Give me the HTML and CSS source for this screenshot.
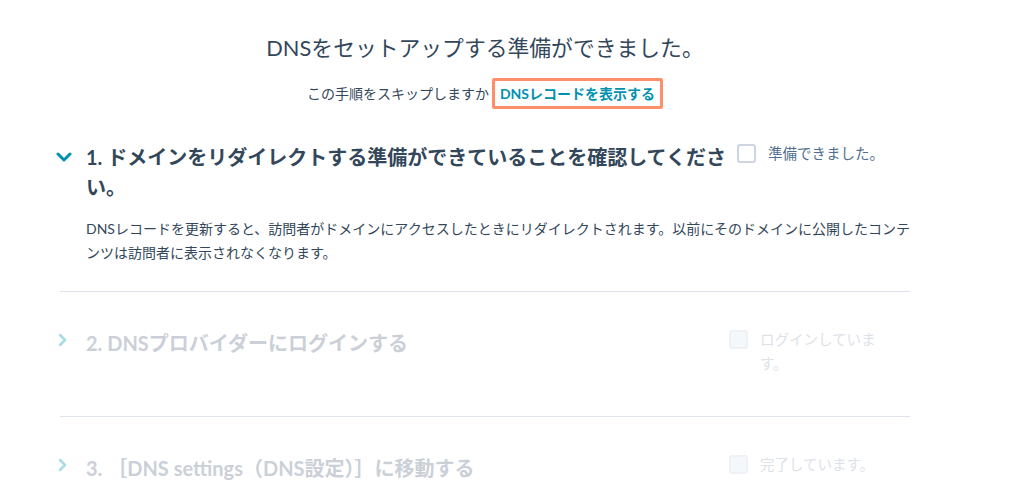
FILE: index.html
```html
<!DOCTYPE html>
<html lang="ja">
<head>
  <meta charset="UTF-8" />
  <meta name="viewport" content="width=device-width, initial-scale=1.0" />
  <title>DNSセットアップ</title>
  <link rel="stylesheet" href="styles.css">
</head>
<body>

  <div class="wizard">
    <h1 class="page-title">DNSをセットアップする準備ができました。</h1>
    <p class="skip">この手順をスキップしますか？<a href="#" class="skip-link">DNSレコードを表示する</a></p>

    <div class="steps">
      <div class="step open">
        <div class="step-head">
          <span class="chev">
            <svg width="16" height="10" viewBox="0 0 16 10"><polyline points="2,2 8,8 14,2" fill="none" stroke="#0091ae" stroke-width="3" stroke-linecap="round" stroke-linejoin="round"/></svg>
          </span>
          <h2 class="step-title">1. ドメインをリダイレクトする準備ができていることを確認してください。</h2>
          <label class="check first">
            <span class="box"></span>
            <span class="check-text">準備できました。</span>
          </label>
        </div>
        <p class="step-desc">DNSレコードを更新すると、訪問者がドメインにアクセスしたときにリダイレクトされます。以前にそのドメインに公開したコンテンツは訪問者に表示されなくなります。</p>
      </div>

      <div class="step disabled">
        <div class="step-head">
          <span class="chev">
            <svg width="10" height="16" viewBox="0 0 10 16"><polyline points="3,3 8,8 3,13" fill="none" stroke="#a9dde6" stroke-width="2.5" stroke-linecap="round" stroke-linejoin="round"/></svg>
          </span>
          <h2 class="step-title">2. DNSプロバイダーにログインする</h2>
          <label class="check">
            <span class="box"></span>
            <span class="check-text">ログインしています。</span>
          </label>
        </div>
      </div>

      <div class="step disabled">
        <div class="step-head">
          <span class="chev">
            <svg width="10" height="16" viewBox="0 0 10 16"><polyline points="3,3 8,8 3,13" fill="none" stroke="#a9dde6" stroke-width="2.5" stroke-linecap="round" stroke-linejoin="round"/></svg>
          </span>
          <h2 class="step-title">3. ［DNS settings（DNS設定）］に移動する</h2>
          <label class="check">
            <span class="box"></span>
            <span class="check-text">完了しています。</span>
          </label>
        </div>
      </div>
    </div>
  </div>

</body>
</html>
```

FILE: styles.css
```css
* {
  box-sizing: border-box;
}

html, body {
  margin: 0;
  padding: 0;
  background: #ffffff;
  color: #33475b;
  font-family: Lato, "Noto Sans CJK JP", sans-serif;
  overflow: hidden;
}

.wizard {
  width: 850px;
  margin-left: 60px;
  padding-top: 33px;
}

.page-title {
  margin: 0;
  text-align: center;
  font-size: 21.8px;
  font-weight: 400;
  line-height: 30px;
}

.skip {
  margin: 15px 0 0;
  text-align: center;
  font-size: 14px;
  line-height: 31px;
}

.skip-link {
  display: inline-block;
  margin-left: -11px;
  padding: 0 5px;
  height: 31px;
  line-height: 25px;
  border: 3px solid #ff8f6b;
  border-radius: 2px;
  background: #ffffff;
  color: #0091ae;
  font-weight: 700;
  font-size: 14px;
  text-decoration: none;
  vertical-align: top;
}

.step {
  border-bottom: 1px solid #dfe3eb;
  padding: 36px 0 40px;
}

.step.open {
  padding: 33px 0 26px;
}

.step-head {
  display: flex;
  align-items: flex-start;
}

.chev {
  flex: none;
  width: 30px;
  height: 30px;
  margin-left: -4px;
  display: flex;
  align-items: center;
}

.step.disabled .chev {
  padding-left: 1px;
  height: 24px;
}

.step-title {
  flex: 1;
  margin: 0;
  font-size: 20px;
  font-weight: 700;
  line-height: 30px;
}

.check {
  flex: none;
  width: 181px;
  padding-right: 25px;
  display: flex;
  align-items: flex-start;
  gap: 12px;
  font-size: 14.5px;
  line-height: 24px;
  color: #516f90;
}

.check.first {
  width: 173px;
  padding-right: 0;
  margin-left: 6px;
}

.box {
  flex: none;
  width: 19px;
  height: 19px;
  margin-top: 2px;
  border: 2px solid #cbd6e2;
  border-radius: 3px;
  background: #ffffff;
}

.step-desc {
  margin: 15px 0 0 26px;
  font-size: 14px;
  line-height: 24px;
}

.step.disabled .step-title {
  color: #cbd0d8;
}

.step.disabled .check {
  color: #dde2e8;
}

.step.disabled .box {
  border-color: #eef1f5;
  background: #f5f8fa;
}
```
